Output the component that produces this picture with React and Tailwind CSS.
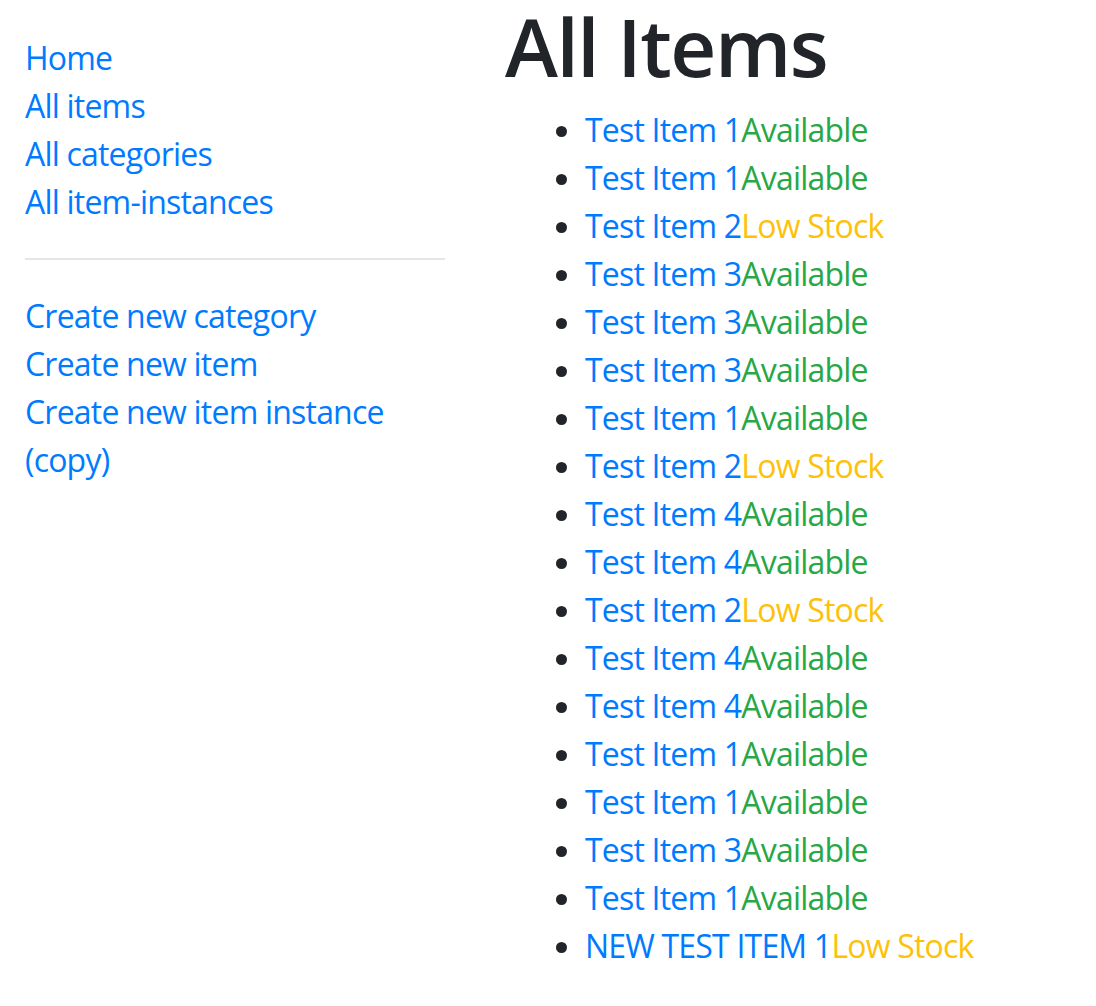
const items = [
  ['Test Item 1', 'Available'],
  ['Test Item 1', 'Available'],
  ['Test Item 2', 'Low Stock'],
  ['Test Item 3', 'Available'],
  ['Test Item 3', 'Available'],
  ['Test Item 3', 'Available'],
  ['Test Item 1', 'Available'],
  ['Test Item 2', 'Low Stock'],
  ['Test Item 4', 'Available'],
  ['Test Item 4', 'Available'],
  ['Test Item 2', 'Low Stock'],
  ['Test Item 4', 'Available'],
  ['Test Item 4', 'Available'],
  ['Test Item 1', 'Available'],
  ['Test Item 1', 'Available'],
  ['Test Item 3', 'Available'],
  ['Test Item 1', 'Available'],
  ['NEW TEST ITEM 1', 'Low Stock'],
];

const topLinks = ['Home', 'All items', 'All categories', 'All item-instances'];
const createLinks = ['Create new category', 'Create new item', 'Create new item instance (copy)'];

export default function App() {
  return (
    <div className="flex bg-white text-[#212529] text-[32px] leading-[48px] font-['Open_Sans',sans-serif] tracking-[-0.8px]">
      <nav className="w-[420px] ml-[25px] pt-[34px] shrink-0">
        <ul>
          {topLinks.map((l) => (
            <li key={l}><a href="#" className="text-[#007bff]">{l}</a></li>
          ))}
        </ul>
        <hr className="my-8 border-t-2 border-[#e6e6e6]" />
        <ul>
          {createLinks.map((l) => (
            <li key={l}><a href="#" className="text-[#007bff]">{l}</a></li>
          ))}
        </ul>
      </nav>
      <main className="ml-[60px]">
        <h1 className="text-[80px] leading-[92px] font-semibold mb-[14px] tracking-[-1.5px]">All Items</h1>
        <ul className="list-disc pl-[80px] marker:text-[#212529]">
          {items.map(([name, status], i) => (
            <li key={i}>
              <a href="#" className="text-[#007bff]">{name}</a>
              <span className={status === 'Available' ? 'text-[#28a745]' : 'text-[#ffc107]'}>{status}</span>
            </li>
          ))}
        </ul>
      </main>
    </div>
  );
}
